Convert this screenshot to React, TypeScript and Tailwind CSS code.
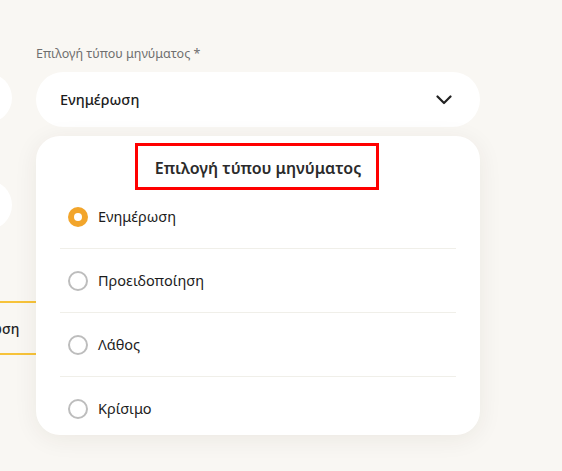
import React, { useState } from 'react';

const types = ['Ενημέρωση', 'Προειδοποίηση', 'Λάθος', 'Κρίσιμο'];

export default function App() {
  const [selected, setSelected] = useState('Ενημέρωση');

  return (
    <div
      className="min-h-screen w-full overflow-hidden bg-[#f9f7f3]"
      style={{ fontFamily: '"Noto Sans", "DejaVu Sans", sans-serif' }}
    >
      <div className="flex items-start gap-6">
        {/* Left column (cropped) */}
        <div className="-ml-[188px] flex w-[200px] shrink-0 flex-col">
          <div className="mt-[73px] h-[50px] w-full rounded-full bg-white" />
          <div className="mt-[57px] h-[50px] w-full rounded-full bg-white" />
          <button className="mt-[71px] -mr-[26px] flex h-[54px] w-[114px] items-center justify-center self-end border-2 border-[#f7c33a] text-[14px] font-medium text-[#1f1f1f]">
            Ενημέρωση
          </button>
        </div>

        {/* Right column */}
        <div className="w-[444px] shrink-0 pt-[46px]">
          <label className="mb-[10px] block text-[12.5px] leading-4 text-[#6f6f6f]">
            Επιλογή τύπου μηνύματος *
          </label>
          <div className="relative">
            <div className="flex h-[55px] items-center justify-between rounded-full bg-white pl-6 pr-7">
              <span className="text-[14.5px] font-medium text-[#1c1c1c]">{selected}</span>
              <svg width="16" height="10" viewBox="0 0 16 10" fill="none">
                <path d="M1.5 1.5L8 8L14.5 1.5" stroke="#222" strokeWidth="2.2" strokeLinecap="round" strokeLinejoin="round" />
              </svg>
            </div>

            {/* Dropdown panel */}
            <div className="absolute left-0 right-0 top-full z-10 mt-[9px] h-[299px] overflow-hidden rounded-[24px] bg-white shadow-[0_4px_24px_rgba(60,40,20,0.07)]">
              <div className="flex h-[49px] items-center justify-center pt-[14px]">
                <h3 className="text-[16px] font-semibold text-[#2b2b2b]">Επιλογή τύπου μηνύματος</h3>
              </div>
              <div className="pointer-events-none absolute left-[99px] top-[7px] h-[47px] w-[244px] border-[3px] border-[#ff0000]" />
              <ul className="px-6">
                {types.map((t, i) => (
                  <li
                    key={t}
                    onClick={() => setSelected(t)}
                    className={`flex h-16 cursor-pointer items-center gap-[10px] pl-[8px] ${i < types.length - 1 ? 'border-b border-[#f0efe9]' : ''}`}
                  >
                    {selected === t ? (
                      <span className="flex h-5 w-5 items-center justify-center rounded-full bg-[#f2a52b]">
                        <span className="h-2 w-2 rounded-full bg-white" />
                      </span>
                    ) : (
                      <span className="h-5 w-5 rounded-full border-2 border-[#bdbdbd]" />
                    )}
                    <span className="text-[14.5px] text-[#1c1c1c]">{t}</span>
                  </li>
                ))}
              </ul>
            </div>
          </div>
        </div>
      </div>
    </div>
  );
}
